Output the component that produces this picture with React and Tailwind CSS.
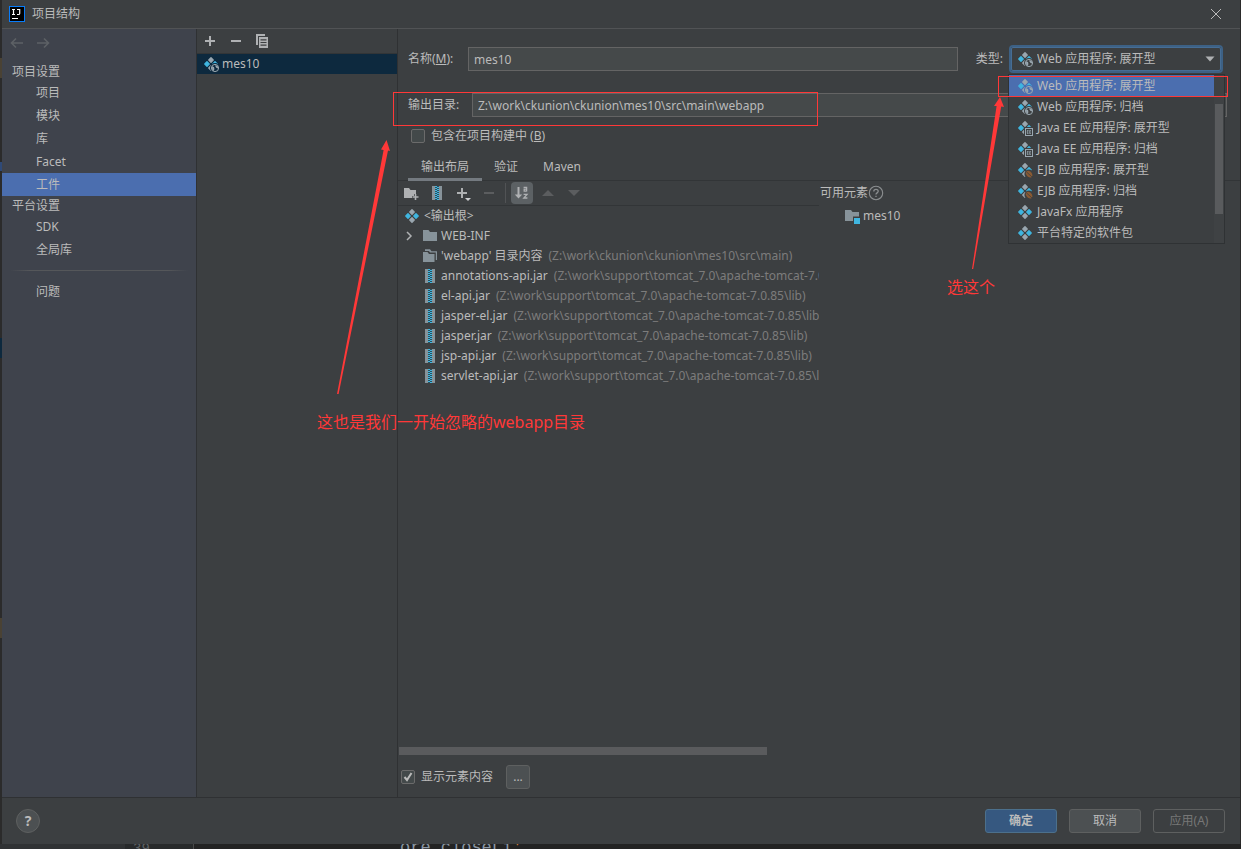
const UI = "font-['Noto_Sans','Noto_Sans_CJK_SC',sans-serif]";

function Diamond({ x, y, fill }) {
  const r = 2.2;
  return (
    <path
      d={`M${x} ${y - r}L${x + r} ${y}L${x} ${y + r}L${x - r} ${y}Z`}
      fill={fill}
      stroke={fill}
      strokeWidth="1.4"
      strokeLinejoin="round"
    />
  );
}

function ArtifactIcon({ kind = "plain", bg = "#3c3f41" }) {
  return (
    <svg viewBox="0 0 16 16" className="size-4 shrink-0" aria-hidden="true">
      <Diamond x={8} y={4} fill="#9aa7b0" />
      <Diamond x={4} y={8} fill="#40b6e0" />
      <Diamond x={12} y={8} fill="#40b6e0" />
      <Diamond x={8} y={12} fill="#9aa7b0" />
      {kind === "web" && (
        <g>
          <circle cx="12" cy="12" r="5" fill={bg} />
          <circle cx="12" cy="12" r="3.6" fill="none" stroke="#9aa7b0" strokeWidth="1" />
          <path d="M9 10.2L11 11L11.4 13L10.8 15L9.2 13.8ZM12.5 9L14.8 10.2L15.3 12.6L13.6 12L12.4 10.6Z" fill="#9aa7b0" />
        </g>
      )}
      {kind === "ee" && (
        <g>
          <rect x="7" y="7" width="9" height="9" fill={bg} />
          <rect x="8.5" y="8.5" width="7" height="7" fill="none" stroke="#9aa7b0" />
          <path d="M10 10.5H11.6M10 12H11.6M10 13.5H11.6M12.4 10.5H14M12.4 12H14M12.4 13.5H14M10.3 10.5V13.5M12.7 10.5V13.5" stroke="#9aa7b0" strokeWidth="0.7" />
        </g>
      )}
      {kind === "ejb" && (
        <g>
          <circle cx="12" cy="12" r="4.6" fill={bg} />
          <path d="M9.4 9.4C11 8 14 9.4 15 11.6C15.6 13.2 15.4 14.6 14.6 15.2C13 16.2 10.4 15 9.2 12.6C8.6 11.2 8.6 10.2 9.4 9.4Z" fill="#8a5a32" />
          <path d="M9.4 9.8L15 15" stroke={bg} strokeWidth="0.8" />
        </g>
      )}
    </svg>
  );
}

function FolderIcon() {
  return (
    <svg viewBox="0 0 16 16" className="size-4 shrink-0" aria-hidden="true">
      <path d="M1 2H6.5L8 4H15V13H1Z" fill="#87939a" />
    </svg>
  );
}

function CopiedFolderIcon() {
  return (
    <svg viewBox="0 0 16 16" className="size-4 shrink-0" aria-hidden="true">
      <path d="M1 4H5.5L7 6H12.5V14H1Z" fill="#87939a" />
      <path d="M3 3V1.2H8L9.5 3.2H15V12H13.8V4.6H8.2L6.8 3Z" fill="#87939a" />
    </svg>
  );
}

function ModuleIcon() {
  return (
    <svg viewBox="0 0 16 16" className="size-4 shrink-0" aria-hidden="true">
      <path d="M1 2H7L8.5 4H15V8.5H9V13H1Z" fill="#87939a" />
      <rect x="10" y="10" width="6" height="6" fill="#40b6e0" />
    </svg>
  );
}

const TEETH = [1, 3, 5, 7, 9, 11, 13];

function JarIcon() {
  return (
    <svg viewBox="0 0 16 16" className="size-4 shrink-0" aria-hidden="true">
      <rect x="3" y="1" width="10" height="14" fill="#87939a" />
      <rect x="6" y="1" width="4" height="14" fill="#2b4f5e" />
      {TEETH.map((y) => (
        <g key={y} fill="#40b6e0">
          <rect x="6" y={y} width="2" height="1" />
          <rect x="8" y={y + 1} width="2" height="1" />
        </g>
      ))}
    </svg>
  );
}

function PlusIcon() {
  return (
    <svg viewBox="0 0 16 16" className="size-4" aria-hidden="true">
      <path d="M8 3V13M3 8H13" stroke="#afb1b3" strokeWidth="2" />
    </svg>
  );
}

function MinusIcon({ color = "#afb1b3" }) {
  return (
    <svg viewBox="0 0 16 16" className="size-4" aria-hidden="true">
      <path d="M3 8H13" stroke={color} strokeWidth="2" />
    </svg>
  );
}

function ToolButton({ label, children }) {
  return (
    <button type="button" aria-label={label} className="flex h-full w-[26px] items-center justify-center">
      {children}
    </button>
  );
}

function NavItem({ children, selected }) {
  return (
    <li>
      <a href="#" className={`flex h-[23px] items-center pl-[34px] ${selected ? "bg-[#4b6eaf]" : ""}`}>
        {children}
      </a>
    </li>
  );
}

function Sidebar() {
  return (
    <nav className="w-[195px] shrink-0 border-r border-[#2f3133] bg-[#3f434c]">
      <div className="flex h-7 items-center gap-3 pl-2">
        <button type="button" aria-label="后退">
          <svg viewBox="0 0 14 12" className="h-3 w-3.5" fill="none" stroke="#5d6165" strokeWidth="1.6" aria-hidden="true">
            <path d="M13 6H1.5M6 1.5L1.5 6L6 10.5" />
          </svg>
        </button>
        <button type="button" aria-label="前进">
          <svg viewBox="0 0 14 12" className="h-3 w-3.5" fill="none" stroke="#5d6165" strokeWidth="1.6" aria-hidden="true">
            <path d="M1 6H12.5M8 1.5L12.5 6L8 10.5" />
          </svg>
        </button>
      </div>
      <h2 className="mt-[5px] flex h-[19px] items-center pl-[10px]">项目设置</h2>
      <ul>
        <NavItem>项目</NavItem>
        <NavItem>模块</NavItem>
        <NavItem>库</NavItem>
        <NavItem>Facet</NavItem>
        <NavItem selected>工件</NavItem>
      </ul>
      <h2 className="flex h-[19px] items-center pl-[10px]">平台设置</h2>
      <ul>
        <NavItem>SDK</NavItem>
        <NavItem>全局库</NavItem>
      </ul>
      <div className="mx-2 my-[9px] flex h-px">
        <div className="w-5 bg-linear-to-r from-transparent to-[#55575a]" />
        <div className="grow bg-[#55575a]" />
        <div className="w-5 bg-linear-to-r from-[#55575a] to-transparent" />
      </div>
      <ul>
        <NavItem>问题</NavItem>
      </ul>
    </nav>
  );
}

function ArtifactList() {
  return (
    <section className="w-[201px] shrink-0 border-r border-[#2f3133]">
      <div className="flex h-[24px] items-center">
        <ToolButton label="添加"><PlusIcon /></ToolButton>
        <ToolButton label="移除"><MinusIcon /></ToolButton>
        <ToolButton label="复制">
          <svg viewBox="0 0 16 16" className="size-4" aria-hidden="true">
            <path d="M2 1H11V3H4V12H2Z" fill="#afb1b3" />
            <path d="M5 4H14V15H5ZM6.5 6.2V7.4H12.5V6.2ZM6.5 8.9V10.1H12.5V8.9ZM6.5 11.6V12.8H12.5V11.6Z" fill="#afb1b3" fillRule="evenodd" />
          </svg>
        </ToolButton>
      </div>
      <ul>
        <li className="flex h-[21px] items-center gap-[3px] border-t border-[#323537] bg-[#0d293e] pl-[6px]">
          <ArtifactIcon kind="web" bg="#0d293e" />
          mes10
        </li>
      </ul>
    </section>
  );
}

const TYPES = [
  ["Web 应用程序: 展开型", "web"],
  ["Web 应用程序: 归档", "web"],
  ["Java EE 应用程序: 展开型", "ee"],
  ["Java EE 应用程序: 归档", "ee"],
  ["EJB 应用程序: 展开型", "ejb"],
  ["EJB 应用程序: 归档", "ejb"],
  ["JavaFx 应用程序", "plain"],
  ["平台特定的软件包", "plain"],
];

function TypeSelect() {
  return (
    <div className="relative w-[214px] shrink-0">
      <div className="relative flex items-center">
        <span className="pointer-events-none absolute left-2"><ArtifactIcon kind="web" /></span>
        <select
          id="type"
          defaultValue={TYPES[0][0]}
          className="h-7 w-full appearance-none rounded border-2 border-[#3d6185] bg-[#3c3f41] pl-[26px] outline-1 -outline-offset-3 outline-[#466d94]"
        >
          {TYPES.map(([name]) => <option key={name}>{name}</option>)}
        </select>
        <svg viewBox="0 0 10 6" className="pointer-events-none absolute right-2 h-[6px] w-[10px]" aria-hidden="true">
          <path d="M0.5 0.5H9.5L5 5.5Z" fill="#afb1b3" />
        </svg>
      </div>
      <div className="absolute top-[29px] -left-px z-10 flex w-[217px] border border-[#2f3234] bg-[#3c3f41]">
        <ul role="listbox" aria-label="类型" className="grow">
          {TYPES.map(([name, kind], i) => (
            <li
              key={name}
              role="option"
              aria-selected={i === 0}
              className={`flex h-[21px] items-center gap-1 pl-2 ${i === 0 ? "bg-[#4b6eaf]" : ""}`}
            >
              <ArtifactIcon kind={kind} bg={i === 0 ? "#4b6eaf" : "#3c3f41"} />
              {name}
            </li>
          ))}
        </ul>
        <div className="w-[10px] bg-[#3f4244] px-px pt-[29px]">
          <div className="h-[110px] bg-[#595b5d]" />
        </div>
      </div>
    </div>
  );
}

const JAR_PATH = "(Z:\\work\\support\\tomcat_7.0\\apache-tomcat-7.0.85\\lib)";
const JARS = ["annotations-api.jar", "el-api.jar", "jasper-el.jar", "jasper.jar", "jsp-api.jar", "servlet-api.jar"];

function TreeRow({ icon, name, path, arrow }) {
  return (
    <li className="flex h-5 items-center gap-[3px] pl-[6px] whitespace-nowrap">
      <span className="flex w-[15px] shrink-0">
        {arrow && (
          <svg viewBox="0 0 10 10" className="size-2.5" fill="none" stroke="#afb1b3" strokeWidth="1.5" aria-hidden="true">
            <path d="M3 1L7 5L3 9" />
          </svg>
        )}
      </span>
      {icon}
      <span className="flex gap-[6px]">
        <span>{name}</span>
        {path && <span className="text-[#7c7c7c]">{path}</span>}
      </span>
    </li>
  );
}

function LayoutPane() {
  return (
    <div className="flex w-1/2 flex-col overflow-hidden">
      <div className="flex h-[25px] items-center border-b border-[#323537]">
        <ToolButton label="新建文件夹">
          <svg viewBox="0 0 16 16" className="size-4" aria-hidden="true">
            <path d="M1 3H6L7.5 5H13V9H11V11H9V13H1Z" fill="#afb1b3" />
            <path d="M12.5 9V15M9.5 12H15.5" stroke="#afb1b3" strokeWidth="1.6" />
          </svg>
        </ToolButton>
        <ToolButton label="新建归档"><JarIcon /></ToolButton>
        <ToolButton label="添加副本">
          <svg viewBox="0 0 16 16" className="size-4" aria-hidden="true">
            <path d="M7 3V13M2 8H12" stroke="#afb1b3" strokeWidth="2" />
            <path d="M10 13H16L13 16Z" fill="#ced0d2" />
          </svg>
        </ToolButton>
        <ToolButton label="移除"><MinusIcon color="#5b5d5f" /></ToolButton>
        <div className="mx-[3px] h-5 w-px bg-[#515355]" />
        <button type="button" aria-label="按名称排序" className="mx-[2px] flex size-[22px] items-center justify-center rounded-sm bg-[#5c6164]">
          <svg viewBox="0 0 16 16" className="size-4" aria-hidden="true">
            <path d="M4.5 2V12" stroke="#afb1b3" strokeWidth="2" />
            <path d="M0.8 9.5H8.2L4.5 13.5Z" fill="#afb1b3" />
            <g fill="none" stroke="#afb1b3" strokeWidth="1.3">
              <path d="M9.6 2.4H12.6V6.5M12.6 4.2H10.2V6.1H12.6M9.6 9.4H13L9.8 13H13.4" />
            </g>
          </svg>
        </button>
        <ToolButton label="上移">
          <svg viewBox="0 0 12 6" className="h-[6px] w-3" aria-hidden="true"><path d="M0 6H12L6 0Z" fill="#5b5d5f" /></svg>
        </ToolButton>
        <ToolButton label="下移">
          <svg viewBox="0 0 12 6" className="h-[6px] w-3" aria-hidden="true"><path d="M0 0H12L6 6Z" fill="#5b5d5f" /></svg>
        </ToolButton>
      </div>
      <ul className="grow">
        <li className="flex h-5 items-center gap-1 pl-[6px]">
          <ArtifactIcon />
          &lt;输出根&gt;
        </li>
        <TreeRow arrow icon={<FolderIcon />} name="WEB-INF" />
        <TreeRow icon={<CopiedFolderIcon />} name="'webapp' 目录内容" path={"(Z:\\work\\ckunion\\ckunion\\mes10\\src\\main)"} />
        {JARS.map((jar) => <TreeRow key={jar} icon={<JarIcon />} name={jar} path={JAR_PATH} />)}
      </ul>
      <div className="h-2 pl-px"><div className="h-2 w-7/8 bg-[#5a5b5d]" /></div>
    </div>
  );
}

const CHECK =
  "size-[14px] shrink-0 appearance-none rounded-xs border border-[#6b6b6b] bg-[#43494a]";
const FIELD = "h-6 min-w-0 grow border border-[#646464] bg-[#45494a] px-[5px]";

function Editor() {
  return (
    <main className="flex min-w-0 grow flex-col">
      <div className="flex items-center pt-4 pr-[17px] pl-[10px]">
        <label htmlFor="name" className="w-[60px] shrink-0">名称(<u>M</u>):</label>
        <input id="name" defaultValue="mes10" className={FIELD} />
        <label htmlFor="type" className="mr-1.5 ml-[18px] shrink-0">类型:</label>
        <TypeSelect />
      </div>
      <div className="mt-5 flex items-center pr-[13px] pl-[10px]">
        <label htmlFor="output" className="w-16 shrink-0">输出目录:</label>
        <input id="output" defaultValue={"Z:\\work\\ckunion\\ckunion\\mes10\\src\\main\\webapp"} className={FIELD} />
      </div>
      <div className="flex h-[38px] items-center gap-1.5 pl-[13px]">
        <input id="include" type="checkbox" className={CHECK} />
        <label htmlFor="include">包含在项目构建中 (<u>B</u>)</label>
      </div>
      <div role="tablist" className="flex h-[26px] border-b border-[#323537] pl-[10px]">
        <button type="button" role="tab" aria-selected="true" className="-mb-px border-b-3 border-[#747a80] px-[13px]">输出布局</button>
        <button type="button" role="tab" aria-selected="false" className="-mb-px border-b-3 border-transparent px-3">验证</button>
        <button type="button" role="tab" aria-selected="false" className="-mb-px border-b-3 border-transparent px-[13px]">Maven</button>
      </div>
      <div className="flex grow">
        <LayoutPane />
        <section className="w-1/2 pl-px">
          <h2 className="flex h-[25px] items-center pb-px">
            可用元素
            <svg viewBox="0 0 16 16" className="size-4" fill="none" stroke="#8b8e90" aria-hidden="true">
              <circle cx="8" cy="8" r="6.7" strokeWidth="1.1" />
              <path d="M5.8 6.4C5.8 3.6 10.2 3.7 10.2 6.3C10.2 7.9 8 7.9 8 9.6M8 10.7V12.1" strokeWidth="1.3" />
            </svg>
          </h2>
          <ul>
            <li className="flex h-5 items-center gap-[3px] pl-6"><ModuleIcon />mes10</li>
          </ul>
        </section>
      </div>
      <div className="flex h-[42px] items-center gap-1.5 pt-0.5 pl-[3px]">
        <span className="relative flex">
          <input id="show" type="checkbox" defaultChecked className={CHECK} />
          <svg viewBox="0 0 14 14" className="pointer-events-none absolute inset-0 size-[14px]" fill="none" stroke="#bbbbbb" strokeWidth="2" aria-hidden="true">
            <path d="M3.5 7L6 10L10.5 3" />
          </svg>
        </span>
        <label htmlFor="show">显示元素内容</label>
        <button type="button" className="ml-[7px] size-6 rounded-[3px] border border-[#5e6060] bg-[#4c5052]">...</button>
      </div>
    </main>
  );
}

function Footer() {
  const base = "h-6 w-[72px] rounded-[3px] border";
  return (
    <footer className="flex h-[47px] shrink-0 items-center border-t border-[#2f3133] pr-[15px] pl-3.5">
      <button type="button" aria-label="帮助" className="flex size-6 items-center justify-center rounded-full border border-[#5e6060] bg-[#4c5052] text-sm font-bold">?</button>
      <div className="ml-auto flex gap-3">
        <button type="button" className={`${base} border-[#4c708c] bg-[#365880] font-bold`}>确定</button>
        <button type="button" className={`${base} border-[#5e6060] bg-[#4c5052]`}>取消</button>
        <button type="button" disabled className={`${base} border-[#5e6060] text-[#777777]`}>应用(A)</button>
      </div>
    </footer>
  );
}

function EditorStrip() {
  return (
    <div className="flex h-[5px] shrink-0 overflow-hidden bg-[#232323] font-['Liberation_Mono',monospace]">
      <span className="w-[125px] shrink-0 bg-[#303234]" />
      <span className="w-[69px] shrink-0 border-r border-[#4a4a4a] bg-[#282a2b] pl-2 text-sm leading-[10px] text-[#606366]">39</span>
      <span className="w-[206px] shrink-0" />
      <span className="text-[17px] leading-[8px] text-[#8b97a3]">ore closeLi<span className="text-[#cc7832]">'</span></span>
    </div>
  );
}

function Annotations() {
  return (
    <div className="pointer-events-none absolute inset-0 z-20 text-base leading-5 text-[#ff3838]">
      <div className="absolute top-[92px] left-[393px] h-[34px] w-[425px] border border-[#ff3838]" />
      <div className="absolute top-[76px] left-[998px] h-[21px] w-[230px] border border-[#ff3838]" />
      <svg viewBox="0 0 1241 849" className="absolute top-0 left-0 h-[849px] w-[1241px]" fill="#ff3838" aria-hidden="true">
        <path d="M337 394L383.6 150L381 149.5L386.5 140L390 151L388 150.6L338.6 394Z" />
        <path d="M972 269L996.6 106L994 106L1000 97L1004 107L1001.2 106.6L973.2 269Z" />
      </svg>
      <p className="absolute top-[412px] left-[317px] whitespace-nowrap">这也是我们一开始忽略的webapp目录</p>
      <p className="absolute top-[277px] left-[947px] whitespace-nowrap">选这个</p>
    </div>
  );
}

export default function App() {
  return (
    <div className={`relative flex min-h-screen flex-col bg-[#2b2b2b] text-xs text-[#bbbbbb] ${UI}`}>
      <div className="mr-px flex grow">
        <div className="w-0.5 shrink-0">
          <div className="mt-[58px] h-5 bg-[#4a4234]" />
          <div className="mt-[84px] h-[9px] bg-[#2f4a78]" />
          <div className="mt-[167px] h-5 bg-[#0d293e]" />
          <div className="mt-[260px] h-5 bg-[#4a4234]" />
        </div>
        <div className="flex min-w-0 grow flex-col bg-[#3c3f41]">
          <header className="flex h-[29px] shrink-0 items-center border-b border-[#515355] pr-[18px] pl-[7px]">
            <svg viewBox="0 0 16 16" className="size-4" aria-hidden="true">
              <rect x="0.5" y="0.5" width="15" height="15" fill="#000" stroke="#087cfa" />
              <path d="M3 3.5H6M4.5 3.5V8.5M3 8.5H6M8 3.5H10.7V7.4Q10.7 8.5 9.4 8.5H8" fill="none" stroke="#fff" strokeWidth="1.2" />
              <path d="M3 12.5H9" stroke="#fff" />
            </svg>
            <h1 className="ml-[7px]">项目结构</h1>
            <button type="button" aria-label="关闭" className="ml-auto">
              <svg viewBox="0 0 12 12" className="size-3" stroke="#bbbbbb" aria-hidden="true"><path d="M1 1L11 11M11 1L1 11" /></svg>
            </button>
          </header>
          <div className="flex grow">
            <Sidebar />
            <ArtifactList />
            <Editor />
          </div>
          <Footer />
        </div>
      </div>
      <EditorStrip />
      <Annotations />
    </div>
  );
}
